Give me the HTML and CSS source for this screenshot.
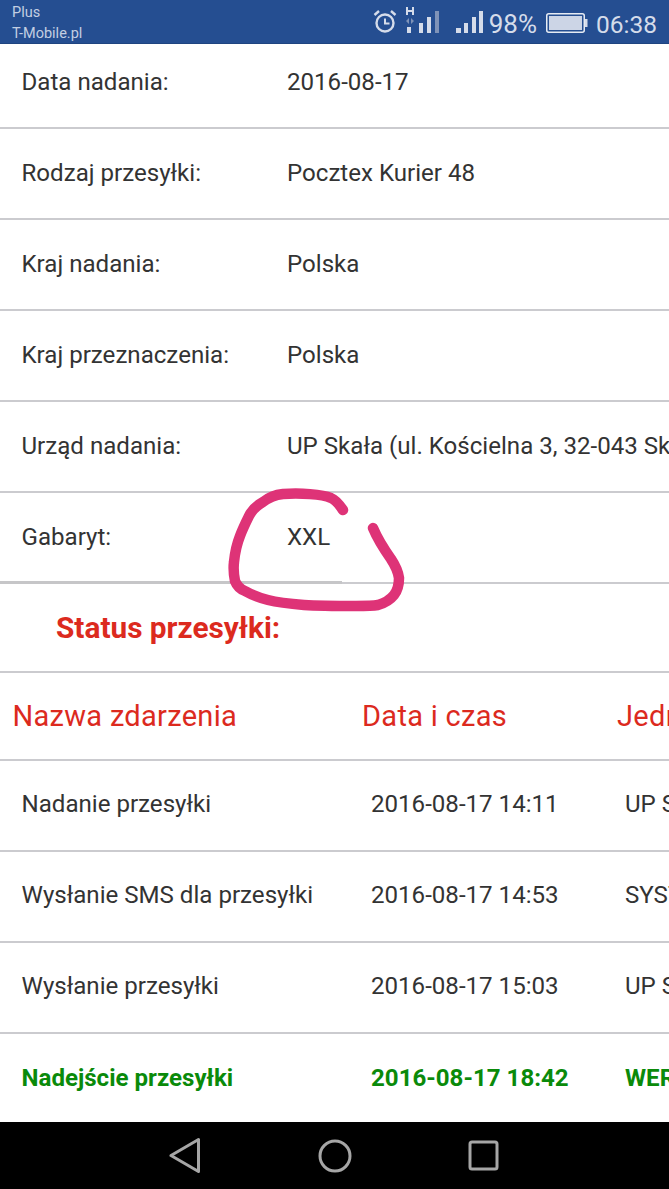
FILE: index.html
```html
<!DOCTYPE html>
<html lang="pl">
<head>
    <meta charset="UTF-8">
    <meta name="viewport" content="width=device-width, initial-scale=1.0">
    <title>Status przesyłki</title>
    <link rel="stylesheet" href="styles.css">
</head>
<body>
    <div class="phone">
        <header class="statusbar">
            <div class="carrier">
                <span>Plus</span>
                <span>T-Mobile.pl</span>
            </div>
            <div class="status-icons">
                <svg class="icon-alarm" width="24" height="24" viewBox="0 0 24 24">
                    <circle cx="12" cy="14" r="8.500" fill="none" stroke="#d5dcea" stroke-width="2.400"/>
                    <path d="M12 9.500v5h4.500" fill="none" stroke="#d5dcea" stroke-width="2"/>
                    <path d="M1.500 6 6 2M22.500 6 18 2" fill="none" stroke="#d5dcea" stroke-width="2.400"/>
                </svg>
                <svg class="icon-signal-h" width="35" height="26" viewBox="0 0 35 26">
                    <path d="M2 0v8M8 0v8M2 4h6" fill="none" stroke="#d5dcea" stroke-width="2"/>
                    <path d="M4 11 1 14l3 3zM6 11l3 3-3 3z" fill="#7f93b8"/>
                    <rect x="2" y="20" width="4" height="6" fill="#d5dcea"/>
                    <rect x="14" y="16" width="4" height="10" fill="#d5dcea"/>
                    <rect x="22" y="10" width="4" height="16" fill="#d5dcea"/>
                    <rect x="30" y="4" width="4" height="22" fill="#7f93b8"/>
                </svg>
                <svg class="icon-signal" width="27" height="22" viewBox="0 0 27 22">
                    <rect x="0" y="17" width="5" height="5" fill="#d5dcea"/>
                    <rect x="8" y="12" width="4" height="10" fill="#d5dcea"/>
                    <rect x="16" y="6" width="4" height="16" fill="#d5dcea"/>
                    <rect x="23" y="0" width="4" height="22" fill="#d5dcea"/>
                </svg>
                <span class="battery-pct">98%</span>
                <svg class="icon-battery" width="42" height="20" viewBox="0 0 42 20">
                    <rect x="0.750" y="0.750" width="37.500" height="18.500" rx="2" fill="none" stroke="#e6ebf3" stroke-width="1.500"/>
                    <rect x="3" y="3" width="33" height="14" fill="#ccd5e6"/>
                    <rect x="39" y="6" width="2.500" height="8" fill="#d5dcea"/>
                </svg>
                <span class="clock">06:38</span>
            </div>
        </header>

        <main class="content">
            <div class="row row-first">
                <span class="label">Data nadania:</span>
                <span>2016-08-17</span>
            </div>
            <div class="row">
                <span class="label">Rodzaj przesyłki:</span>
                <span>Pocztex Kurier 48</span>
            </div>
            <div class="row">
                <span class="label">Kraj nadania:</span>
                <span>Polska</span>
            </div>
            <div class="row">
                <span class="label">Kraj przeznaczenia:</span>
                <span>Polska</span>
            </div>
            <div class="row">
                <span class="label">Urząd nadania:</span>
                <span class="nowrap">UP Skała (ul. Kościelna 3, 32-043 Skała)</span>
            </div>
            <div class="row row-last">
                <span class="label">Gabaryt:</span>
                <span>XXL</span>
            </div>

            <h2 class="section-title">Status przesyłki:</h2>

            <div class="events-head">
                <span>Nazwa zdarzenia</span>
                <span>Data i czas</span>
                <span>Jednostka</span>
            </div>
            <div class="event">
                <span>Nadanie przesyłki</span>
                <span>2016-08-17 14:11</span>
                <span>UP Skała</span>
            </div>
            <div class="event">
                <span>Wysłanie SMS dla przesyłki</span>
                <span>2016-08-17 14:53</span>
                <span>SYSTEM</span>
            </div>
            <div class="event">
                <span>Wysłanie przesyłki</span>
                <span>2016-08-17 15:03</span>
                <span>UP Skała</span>
            </div>
            <div class="event event-current">
                <span>Nadejście przesyłki</span>
                <span>2016-08-17 18:42</span>
                <span>WER Kraków</span>
            </div>

            <!-- pen mark drawn over the screenshot -->
            <svg class="ink" width="669" height="1077" viewBox="0 44 669 1077">
                <path d="M343 510C339 504 336 500 331 498C322 494 300 493 283 494C274 495 268 498 263 502C256 506 252 510 249 516C246 522 243 528 240 536C236 546 235 552 234 562C233 570 234 576 235 581C237 586 240 589 245 591C252 595 260 598 268 600C280 603 292 604 304 605C320 606 340 606 356 606C364 606 372 606 378 605C385 603 390 600 394 595C398 590 399 584 399 578C398 571 395 565 391 559C384 549 378 540 373 528" fill="none" stroke="#de3377" stroke-width="10.500" stroke-linecap="round" stroke-linejoin="round"/>
            </svg>
        </main>

        <nav class="navbar">
            <svg width="32" height="37" viewBox="0 0 32 37">
                <path d="M29.500 2.500V34.500L2 18.500z" fill="none" stroke="#a6a6a6" stroke-width="3" stroke-linejoin="round"/>
            </svg>
            <svg width="34" height="34" viewBox="0 0 34 34">
                <circle cx="17" cy="17" r="15" fill="none" stroke="#a6a6a6" stroke-width="3"/>
            </svg>
            <svg width="31" height="31" viewBox="0 0 31 31">
                <rect x="2" y="2" width="27" height="27" rx="2" fill="none" stroke="#a6a6a6" stroke-width="3"/>
            </svg>
        </nav>
    </div>
</body>
</html>
```

FILE: styles.css
```css
html, body {
    margin: 0;
    padding: 0;
}

body {
    font-family: Roboto, "Liberation Sans", sans-serif;
    background: #fff;
    color: #333;
}

.phone {
    width: 669px;
    height: 1189px;
    display: flex;
    flex-direction: column;
    overflow: hidden;
}

/* status bar */
.statusbar {
    height: 44px;
    flex: none;
    box-sizing: border-box;
    border-bottom: 1px solid #1f4480;
    background: #254e91;
    color: #d5dcea;
    display: flex;
    justify-content: space-between;
    align-items: center;
    padding: 0 12px;
}

.carrier {
    display: flex;
    flex-direction: column;
    gap: 5px;
    margin-top: 4px;
    font-size: 14.500px;
    line-height: 16px;
    color: #c3cee2;
}

.status-icons {
    display: flex;
    align-items: baseline;
    margin-top: 1px;
    font-size: 24px;
    line-height: 26px;
}

.icon-signal-h {
    margin-left: 8px;
}

.icon-signal {
    margin-left: 16px;
}

.battery-pct {
    margin-left: 6px;
    font-size: 26px;
}

.icon-battery {
    margin-left: 9px;
}

.clock {
    margin-left: 8px;
    font-size: 24.500px;
}

/* details */
.content {
    flex: 1;
    min-height: 0;
    position: relative;
    overflow: hidden;
    font-size: 24.100px;
}

.row {
    height: 91px;
    box-sizing: border-box;
    border-bottom: 2px solid #cbcbcf;
    display: flex;
    align-items: center;
    padding: 0 0 2px 21.500px;
    white-space: nowrap;
}

.row-first {
    height: 85px;
    padding-bottom: 8px;
}

.row-last {
    position: relative;
}

.row-last::after {
    content: "";
    position: absolute;
    left: 0;
    bottom: -2px;
    width: 342px;
    height: 3px;
    background: #c6c6c8;
}

.label {
    width: 265.500px;
    flex: none;
}

.section-title {
    height: 89px;
    box-sizing: border-box;
    margin: 0;
    border-bottom: 2px solid #cbcbcf;
    display: flex;
    align-items: center;
    padding-left: 56px;
    font-size: 29.800px;
    font-weight: 700;
    color: #dc2a1e;
}

/* events table */
.events-head,
.event {
    box-sizing: border-box;
    border-bottom: 2px solid #cbcbcf;
    display: flex;
    align-items: center;
    white-space: nowrap;
}

.events-head {
    height: 88px;
    padding-left: 12.500px;
    font-size: 29px;
    letter-spacing: 0.300px;
    color: #dc2a1e;
}

.events-head span:nth-child(1) {
    width: 349.500px;
    flex: none;
}

.events-head span:nth-child(2) {
    width: 255px;
    flex: none;
}

.event {
    height: 91px;
    padding: 0 0 3px 21.500px;
}

.event span:nth-child(1) {
    width: 349.500px;
    flex: none;
}

.event span:nth-child(2) {
    width: 254px;
    flex: none;
}

.event-current {
    border-bottom: 0;
    font-weight: 700;
    color: #0a8a0a;
}

.ink {
    position: absolute;
    left: 0;
    top: 0;
    pointer-events: none;
}

/* nav bar */
.navbar {
    height: 67px;
    flex: none;
    background: #000;
    display: flex;
    justify-content: center;
    align-items: center;
    gap: 116.500px;
    padding-right: 1px;
}
```
